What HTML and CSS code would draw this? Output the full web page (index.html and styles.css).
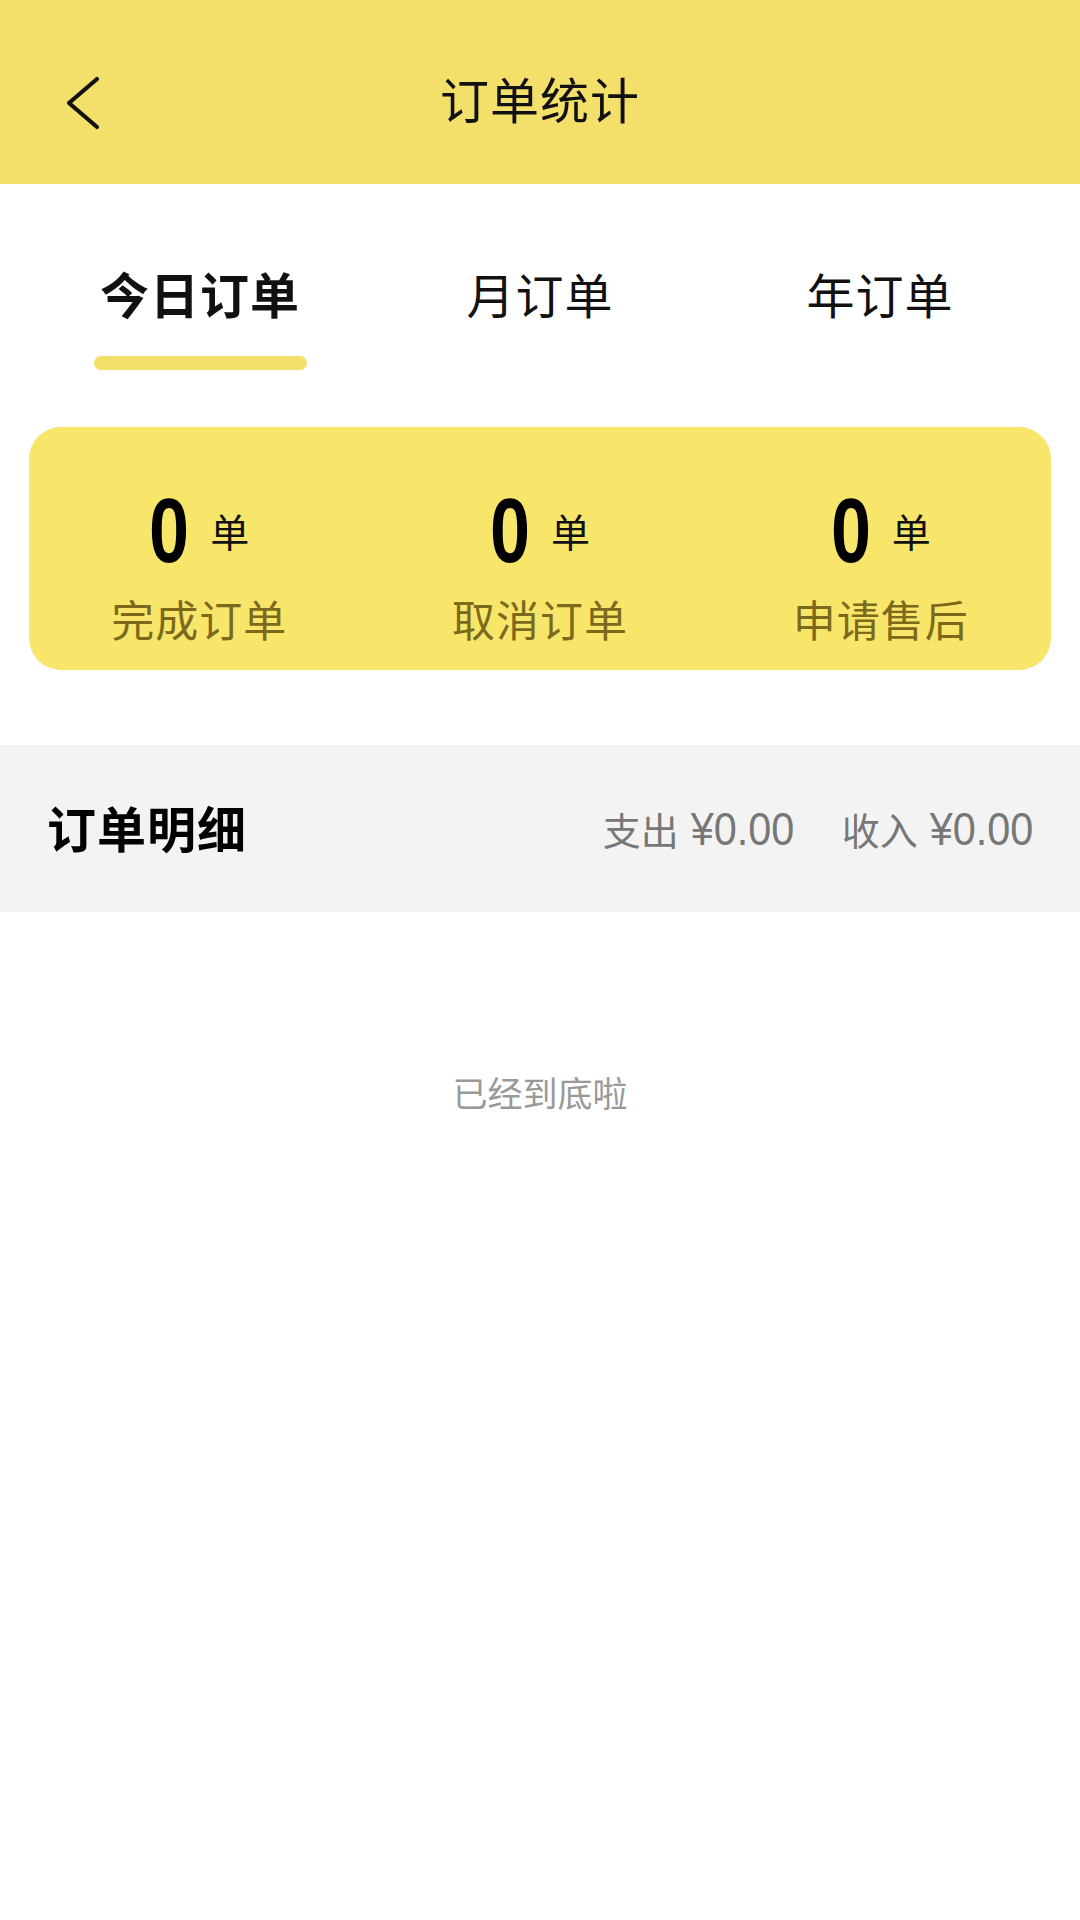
FILE: index.html
```html
<!DOCTYPE html>
<html lang="zh-CN">
<head>
  <meta charset="UTF-8">
  <title>订单统计</title>
  <link rel="stylesheet" href="styles.css">
</head>
<body>
  <div class="header">
    <div class="back">
      <svg viewBox="0 0 40 56" width="40" height="56">
        <polyline points="34,4 6,28 34,52" fill="none" stroke="#111" stroke-width="4.2" stroke-linecap="round" stroke-linejoin="round" />
      </svg>
    </div>
    <div class="title">订单统计</div>
    <div></div>
  </div>

  <div class="tabs">
    <div class="tab active">
      <span class="tab-text">今日订单</span>
      <span class="tab-line"></span>
    </div>
    <div class="tab">
      <span class="tab-text">月订单</span>
      <span class="tab-line"></span>
    </div>
    <div class="tab">
      <span class="tab-text">年订单</span>
      <span class="tab-line"></span>
    </div>
  </div>

  <div class="stats">
    <div class="stat">
      <div class="stat-num"><span class="num">0</span><span class="unit">单</span></div>
      <div class="stat-label">完成订单</div>
    </div>
    <div class="stat">
      <div class="stat-num"><span class="num">0</span><span class="unit">单</span></div>
      <div class="stat-label">取消订单</div>
    </div>
    <div class="stat">
      <div class="stat-num"><span class="num">0</span><span class="unit">单</span></div>
      <div class="stat-label">申请售后</div>
    </div>
  </div>

  <div class="detail">
    <div class="detail-title">订单明细</div>
    <div class="detail-sum">
      <span class="sum-item">支出 <span class="amount">¥0.00</span></span>
      <span class="sum-item">收入 <span class="amount">¥0.00</span></span>
    </div>
  </div>

  <div class="bottom-tip">已经到底啦</div>
</body>
</html>
```

FILE: styles.css
```css
html, body {
  margin: 0;
  padding: 0;
  background: #fff;
}
body {
  width: 1080px;
  min-height: 1920px;
  font-family: "Noto Sans CJK SC", "Noto Sans", sans-serif;
  color: #111;
}
.header {
  height: 184px;
  background: #f3e06b;
  display: grid;
  grid-template-columns: 1fr auto 1fr;
  align-items: center;
  padding: 0 0 0 63px;
  box-sizing: border-box;
}
.back {
  display: flex;
  align-items: center;
  margin-top: 22px;
}
.back svg {
  display: block;
}
.title {
  font-size: 49px;
  line-height: 60px;
  margin-top: 12px;
  margin-right: 63px;
  letter-spacing: 1px;
}
.tabs {
  display: grid;
  grid-template-columns: repeat(3, 1fr);
  padding: 79px 30px 0;
}
.tab {
  display: flex;
  flex-direction: column;
  align-items: center;
}
.tab-text {
  font-size: 48px;
  line-height: 60px;
  letter-spacing: 1px;
}
.tab.active .tab-text {
  font-weight: bold;
  font-size: 49px;
}
.tab-line {
  width: 213px;
  height: 14px;
  border-radius: 7px;
  margin-top: 33px;
  background: transparent;
}
.tab.active .tab-line {
  background: #f3e06b;
}
.stats {
  margin: 57px 29px 0;
  height: 243px;
  border-radius: 32px;
  background: #f7e66a;
  display: grid;
  grid-template-columns: repeat(3, 1fr);
  padding-top: 54px;
  box-sizing: border-box;
}
.stat {
  display: flex;
  flex-direction: column;
  align-items: center;
}
.stat-num {
  height: 100px;
  display: flex;
  align-items: center;
  gap: 21px;
}
.num {
  display: inline-block;
  font-family: "Liberation Sans", Arial, sans-serif;
  font-weight: bold;
  font-size: 90px;
  line-height: 100px;
  color: #000;
  transform: scaleX(0.8);
  margin: 0 -5px;
}
.unit {
  font-size: 39px;
  line-height: 50px;
  color: #111;
  margin-top: -2px;
}
.stat-label {
  margin-top: 12px;
  font-size: 43px;
  line-height: 50px;
  color: #7b6a1c;
  letter-spacing: 1px;
}
.detail {
  margin-top: 75px;
  height: 167px;
  background: #f3f3f3;
  display: flex;
  align-items: center;
  justify-content: space-between;
  padding: 0 47px;
  box-sizing: border-box;
}
.detail-title {
  font-size: 49px;
  font-weight: bold;
  color: #000;
  letter-spacing: 1px;
  margin-top: -4px;
}
.detail-sum {
  display: flex;
  gap: 48px;
  color: #777;
  font-size: 38px;
}
.sum-item {
  display: flex;
  align-items: center;
  gap: 12px;
}
.amount {
  display: inline-block;
  font-family: "Liberation Sans", Arial, sans-serif;
  font-size: 46px;
  color: #777;
  transform: scaleX(0.9);
  margin: 0 -6px;
}
.bottom-tip {
  margin-top: 155px;
  text-align: center;
  font-size: 35px;
  line-height: 50px;
  color: #999;
}
```
